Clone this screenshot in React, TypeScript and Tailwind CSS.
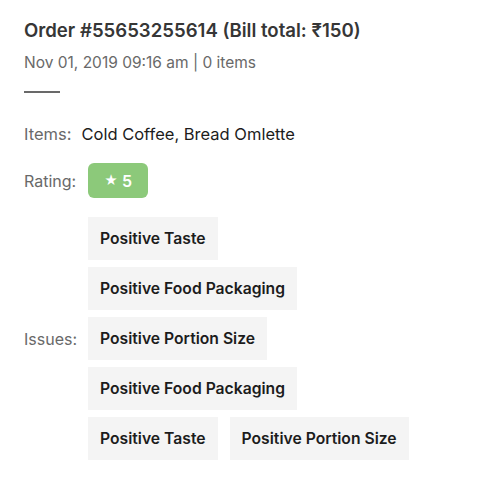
import React from "react";

const issueRows = [
    ["Positive Taste"],
    ["Positive Food Packaging"],
    ["Positive Portion Size"],
    ["Positive Food Packaging"],
    ["Positive Taste", "Positive Portion Size"],
];

export default function App() {
    return (
        <div className="w-[480px] h-[480px] bg-white px-6 pt-[18px] font-['Inter','Open_Sans',sans-serif]">
            <h1 className="text-[18.6px] leading-[24px] font-semibold text-[#363636]">
                Order #55653255614 (Bill total: ₹150)
            </h1>
            <p className="mt-[11px] text-[15.5px] leading-[20px] text-[#696969]">
                Nov 01, 2019 09:16 am | 0 items
            </p>
            <div className="mt-[18px] w-9 h-[2px] bg-[#696969]" />

            <div className="mt-[31px] flex items-center text-[16.5px] leading-[20px]">
                <span className="text-[#696969]">Items:</span>
                <span className="ml-[10px] text-[#1c1c1c]">Cold Coffee, Bread Omlette</span>
            </div>

            <div className="mt-[19px] flex items-center text-[16px]">
                <span className="text-[#696969]">Rating:</span>
                <span className="ml-3 w-[60px] h-[35px] flex items-center justify-center gap-1 rounded-md bg-[#8cc97a] text-white font-semibold">
                    <span className="text-[13px]">★</span>
                    <span>5</span>
                </span>
            </div>

            <div className="mt-[19px] flex items-center">
                <span className="w-16 text-[16px] text-[#696969]">Issues:</span>
                <div className="flex flex-col gap-[7px]">
                    {issueRows.map((row, r) => (
                        <div key={r} className="flex gap-3">
                            {row.map((tag, i) => (
                                <span
                                    key={i}
                                    className="h-[43px] px-3 flex items-center bg-[#f4f4f4] text-[15.7px] text-[#1c1c1c] font-semibold"
                                >
                                    {tag}
                                </span>
                            ))}
                        </div>
                    ))}
                </div>
            </div>
        </div>
    );
}
